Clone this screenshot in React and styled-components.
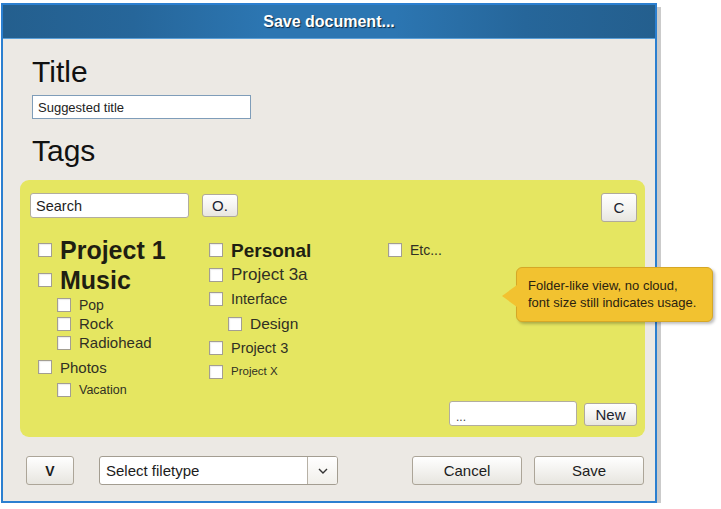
import React from "react";
import styled, { createGlobalStyle } from "styled-components";

// Save dialog with a tag picker

const GlobalStyle = createGlobalStyle`
  html, body {
    margin: 0;
    padding: 0;
    background: #ffffff;
    font-family: "Liberation Sans", Arial, sans-serif;
  }
  * {
    box-sizing: border-box;
  }
`;

const tagColumns = [
  {
    width: 171,
    top: 0,
    items: [
      { label: "Project 1", size: 25, bold: true, h: 30 },
      { label: "Music", size: 25, bold: true, h: 30 },
      { label: "Pop", size: 14, h: 19, indent: true },
      { label: "Rock", size: 15, h: 19, indent: true },
      { label: "Radiohead", size: 15, h: 19, indent: true },
      { label: "Photos", size: 15, h: 30 },
      { label: "Vacation", size: 12.5, h: 16, indent: true },
    ],
  },
  {
    width: 179,
    top: 3,
    items: [
      { label: "Personal", size: 19, bold: true, h: 24 },
      { label: "Project 3a", size: 17, h: 25 },
      { label: "Interface", size: 14.5, h: 24 },
      { label: "Design", size: 15.5, h: 25, indent: true },
      { label: "Project 3", size: 14.5, h: 24 },
      { label: "Project X", size: 11.5, h: 23 },
    ],
  },
  {
    width: 120,
    top: 3,
    items: [{ label: "Etc...", size: 14, h: 24 }],
  },
];

const App = () => {
  return (
    <>
      <GlobalStyle />
      <Window>
        <TitleBar>Save document...</TitleBar>
        <Body>
          <Heading $top={15}>Title</Heading>
          <TitleInput value="Suggested title" readOnly />
          <Heading $top={14}>Tags</Heading>

          <TagPanel>
            <PanelTop>
              <SearchInput value="Search" readOnly />
              <SmallButton $w={36} $h={23}>O.</SmallButton>
              <SmallButton $w={36} $h={29} $push>
                C
              </SmallButton>
            </PanelTop>

            <Columns>
              {tagColumns.map((col, i) => (
                <Column key={i} $w={col.width} $top={col.top}>
                  {col.items.map((item) => (
                    <TagRow key={item.label} $h={item.h} $indent={item.indent}>
                      <Check type="checkbox" />
                      <TagLabel $size={item.size} $bold={item.bold}>
                        {item.label}
                      </TagLabel>
                    </TagRow>
                  ))}
                </Column>
              ))}
            </Columns>

            <PanelBottom>
              <NewTagInput value="..." readOnly />
              <SmallButton $w={53} $h={23}>New</SmallButton>
            </PanelBottom>
          </TagPanel>

          <Footer>
            <Button $w={48} $bold>
              V
            </Button>
            <SelectBox>
              <SelectText>Select filetype</SelectText>
              <SelectArrow>
                <svg width="10" height="6" viewBox="0 0 10 6">
                  <path
                    d="M1 1 L5 5 L9 1"
                    fill="none"
                    stroke="#333"
                    strokeWidth="1.4"
                  />
                </svg>
              </SelectArrow>
            </SelectBox>
            <Button $w={110} $push>
              Cancel
            </Button>
            <Button $w={110}>Save</Button>
          </Footer>
        </Body>

        <Tooltip>
          Folder-like view, no cloud,
          <br />
          font size still indicates usage.
        </Tooltip>
      </Window>
    </>
  );
};

export default App;

// Window frame
const Window = styled.div`
  position: relative;
  margin: 3px 0 0 1px;
  width: 656px;
  height: 500px;
  border: 2px solid #2b7fd0;
  background: #ece9e4;
  box-shadow: 4px 4px 0 #cbcbcb;
  display: flex;
  flex-direction: column;
`;

const TitleBar = styled.div`
  height: 34px;
  flex-shrink: 0;
  display: flex;
  align-items: center;
  justify-content: center;
  background: linear-gradient(
    90deg,
    #245f8e 0%,
    #26669a 20%,
    #2c76b2 40%,
    #2c76b2 60%,
    #26669a 80%,
    #245f8e 100%
  );
  border-bottom: 1px solid #5a9fd8;
  color: #ffffff;
  font-size: 16px;
  font-weight: bold;
  text-shadow: 1px 1px 1px #0c2740;
`;

const Body = styled.div`
  flex: 1;
  display: flex;
  flex-direction: column;
  padding: 0 10px 0 17px;
`;

const Heading = styled.div`
  margin: ${(p) => p.$top}px 0 0 12px;
  font-size: 30px;
  line-height: 36px;
  color: #111111;
`;

const TitleInput = styled.input`
  margin: 5px 0 0 12px;
  width: 219px;
  height: 24px;
  border: 1px solid #7f9db9;
  background: #ffffff;
  padding: 0 5px;
  font-family: "Liberation Sans", Arial, sans-serif;
  font-size: 13px;
  color: #222222;
  outline: none;
`;

// Yellow tag area
const TagPanel = styled.div`
  margin-top: 11px;
  height: 257px;
  background: #e5e661;
  border-radius: 9px;
  padding: 13px 8px 11px 10px;
  display: flex;
  flex-direction: column;
`;

const PanelTop = styled.div`
  display: flex;
  align-items: flex-start;
  gap: 13px;
`;

const SearchInput = styled.input`
  width: 159px;
  height: 25px;
  border: 1px solid #b2ad9f;
  border-radius: 3px;
  background: #ffffff;
  padding: 0 5px;
  font-family: "Liberation Sans", Arial, sans-serif;
  font-size: 14.5px;
  color: #1e1e1e;
  outline: none;
`;

const SmallButton = styled.button`
  width: ${(p) => p.$w}px;
  height: ${(p) => p.$h}px;
  margin-top: ${(p) => (p.$push ? 0 : 1)}px;
  margin-left: ${(p) => (p.$push ? "auto" : "0")};
  padding: 0;
  border: 1px solid #b0aa9c;
  border-radius: 3px;
  background: linear-gradient(#ffffff, #f4f3f0 55%, #e8e6e0);
  font-family: "Liberation Sans", Arial, sans-serif;
  font-size: 15px;
  color: #1c2330;
`;

const Columns = styled.div`
  margin-top: 13px;
  padding-left: 8px;
  display: flex;
`;

const Column = styled.div`
  width: ${(p) => p.$w}px;
  padding-top: ${(p) => p.$top}px;
  display: flex;
  flex-direction: column;
`;

const TagRow = styled.div`
  height: ${(p) => p.$h}px;
  display: flex;
  align-items: center;
  gap: 8px;
  padding-left: ${(p) => (p.$indent ? 19 : 0)}px;
`;

const Check = styled.input`
  appearance: none;
  margin: 0;
  width: 14px;
  height: 14px;
  flex-shrink: 0;
  background: #ffffff;
  border: 1px solid #a39e92;
  box-shadow: inset 1px 1px 1px rgba(0, 0, 0, 0.08);
`;

const TagLabel = styled.span`
  font-size: ${(p) => p.$size}px;
  font-weight: ${(p) => (p.$bold ? "bold" : "normal")};
  line-height: 1;
  color: ${(p) => (p.$bold ? "#1f1f12" : "#303024")};
  white-space: nowrap;
`;

const PanelBottom = styled.div`
  margin-top: auto;
  display: flex;
  justify-content: flex-end;
  align-items: center;
  gap: 7px;
`;

const NewTagInput = styled.input`
  width: 128px;
  height: 25px;
  border: 1px solid #b2ad9f;
  border-radius: 3px;
  background: #ffffff;
  padding: 6px 6px 0;
  font-family: "Liberation Sans", Arial, sans-serif;
  font-size: 12px;
  color: #444444;
  outline: none;
`;

// Bottom bar
const Footer = styled.div`
  margin-top: 19px;
  display: flex;
  align-items: center;
  gap: 25px;
  padding: 0 1px 0 6px;
`;

const Button = styled.button`
  width: ${(p) => p.$w}px;
  height: 29px;
  margin-left: ${(p) => (p.$push ? "auto" : "0")};
  margin-right: ${(p) => (p.$push ? "-13px" : "0")};
  padding: 0;
  border: 1px solid #aca598;
  border-radius: 3px;
  background: linear-gradient(#ffffff, #f3f2ef 50%, #e7e5df);
  font-family: "Liberation Sans", Arial, sans-serif;
  font-size: ${(p) => (p.$bold ? 14 : 15)}px;
  font-weight: ${(p) => (p.$bold ? "bold" : "normal")};
  color: #1c1c1c;
`;

const SelectBox = styled.div`
  width: 239px;
  height: 29px;
  display: flex;
  border: 1px solid #a39d91;
  border-radius: 3px;
  background: #ffffff;
  overflow: hidden;
`;

const SelectText = styled.div`
  flex: 1;
  display: flex;
  align-items: center;
  padding-left: 6px;
  font-size: 15px;
  color: #1c1c1c;
`;

const SelectArrow = styled.div`
  width: 30px;
  display: flex;
  align-items: center;
  justify-content: center;
  border-left: 1px solid #b7b1a6;
  background: linear-gradient(#ffffff, #f1efea);
`;

// Annotation callout over the window edge
const Tooltip = styled.div`
  position: absolute;
  left: 513px;
  top: 262px;
  width: 197px;
  height: 55px;
  padding: 9px 0 0 11px;
  background: #f2c230;
  border: 1px solid #d6a726;
  border-radius: 6px;
  box-shadow: 2px 2px 3px rgba(0, 0, 0, 0.25);
  font-size: 13px;
  line-height: 17px;
  color: #2a2210;

  &::before {
    content: "";
    position: absolute;
    left: -15px;
    top: 17px;
    border-style: solid;
    border-width: 11px 15px 11px 0;
    border-color: transparent #f2c230 transparent transparent;
  }
`;
